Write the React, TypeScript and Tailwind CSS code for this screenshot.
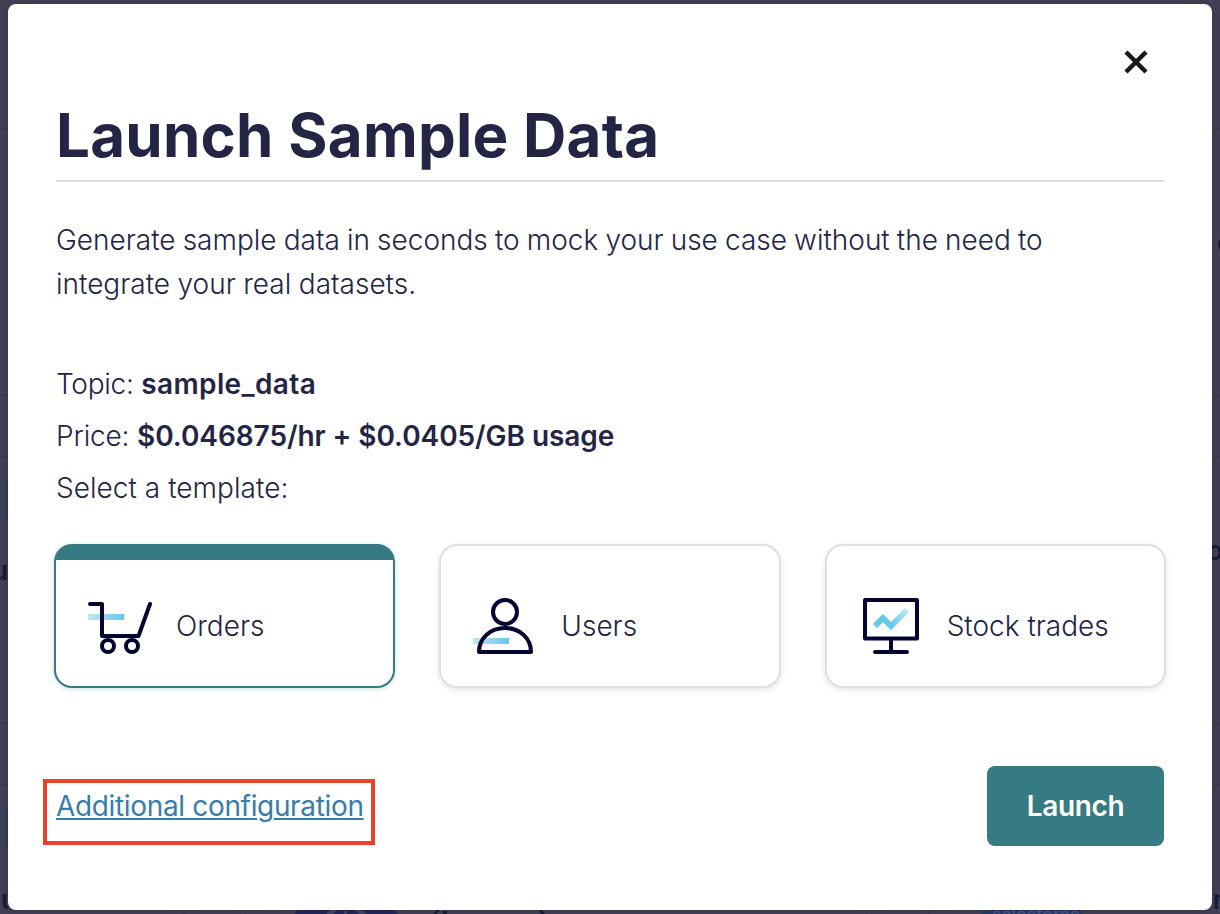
import type { ReactNode } from 'react';

function CartIcon() {
  return (
    <svg width="64" height="64" viewBox="0 0 64 64" fill="none" className="shrink-0">
      <defs>
        <linearGradient id="cart" x1="0" x2="1" y1="0" y2="0">
          <stop stopColor="#c0e8f6" />
          <stop offset="1" stopColor="#64c7e8" />
        </linearGradient>
      </defs>
      <rect y="20" width="36" height="6" fill="url(#cart)" />
      <g stroke="#040431" strokeWidth="4" strokeLinecap="round" strokeLinejoin="round">
        <path d="M2 10H14V42H50.500L62 10" />
        <circle cx="20" cy="52" r="6" />
        <circle cx="44" cy="52" r="6" />
      </g>
    </svg>
  );
}

function UserIcon() {
  return (
    <svg width="64" height="64" viewBox="0 0 64 64" fill="none" className="shrink-0">
      <defs>
        <linearGradient id="user" x1="0" x2="1" y1="0" y2="0">
          <stop stopColor="#c0e8f6" />
          <stop offset="1" stopColor="#64c7e8" />
        </linearGradient>
      </defs>
      <rect y="44" width="36" height="6" fill="url(#user)" />
      <g stroke="#040431" strokeWidth="4" strokeLinejoin="round">
        <circle cx="32" cy="18" r="12" />
        <path d="M6 58C6 44 17.500 34 32 34S58 44 58 58Z" />
      </g>
    </svg>
  );
}

function StockIcon() {
  return (
    <svg width="64" height="64" viewBox="0 0 64 64" fill="none" className="shrink-0">
      <defs>
        <linearGradient id="stock" gradientUnits="userSpaceOnUse" x1="32" y1="32" x2="50" y2="14">
          <stop stopColor="#64c7e8" />
          <stop offset="1" stopColor="#c6ebf8" />
        </linearGradient>
      </defs>
      <path d="M16 32L24 24L32 32L48 16" stroke="url(#stock)" strokeWidth="6" />
      <g stroke="#040431" strokeWidth="4" strokeLinecap="round" strokeLinejoin="round">
        <rect x="6" y="6" width="52" height="38.500" />
        <path d="M32 45V58M16 58H48" />
      </g>
    </svg>
  );
}

function Template({ icon, label, selected = false }: { icon: ReactNode; label: string; selected?: boolean }) {
  return (
    <button
      className={
        selected
          ? 'flex h-36 flex-1 flex-col overflow-hidden rounded-[18px] bg-[#367a82] p-0.5 pt-4 text-left shadow-[0_1px_5px_rgba(54,122,130,0.25)]'
          : 'flex h-36 flex-1 flex-col overflow-hidden rounded-[18px] border-2 border-[#dfdfdf] bg-white pt-[14px] text-left shadow-[0_2px_6px_rgba(0,0,0,0.10)]'
      }
    >
      <span className="flex w-full flex-1 items-center gap-6 rounded-b-2xl bg-white pt-1.5 pl-8">
        {icon}
        <span className="whitespace-nowrap">{label}</span>
      </span>
    </button>
  );
}

function LeftRail() {
  return (
    <div className="col-start-1 row-start-2 flex flex-col overflow-hidden text-[26px] leading-8 font-semibold text-[#19193a]">
      <div className="mt-[124px] h-0.5 shrink-0 bg-[#3c3b50]" />
      <div className="mt-[264px] h-0.5 shrink-0 bg-[#3c3b50]" />
      <div className="mt-[60px] h-0.5 shrink-0 bg-[#3c3b50]" />
      <div className="mt-[18px] h-11 shrink-0 bg-[#3d3e58]" />
      <span className="mt-[35px] -ml-2 h-8">u</span>
      <div className="mt-[135px] h-0.5 shrink-0 bg-[#3c3b50]" />
      <div className="mt-[60px] h-0.5 shrink-0 bg-[#3c3b50]" />
      <div className="mt-[18px] h-11 shrink-0 bg-[#3d3e58]" />
      <span className="mt-9 h-8 pl-px">u</span>
    </div>
  );
}

function RightRail() {
  return (
    <div className="col-start-3 row-start-2 flex flex-col overflow-hidden text-[26px] leading-8 font-semibold text-[#19193a]">
      <div className="mt-[124px] h-0.5 shrink-0 bg-[#3c3b50]" />
      <span className="mt-[97px] h-8 pl-[5px]">o</span>
      <div className="mt-[135px] h-0.5 shrink-0 bg-[#3c3b50]" />
      <div className="mt-[60px] h-0.5 shrink-0 bg-[#3c3b50]" />
      <span className="mt-[77px] -ml-[5px] h-8">o</span>
      <div className="mt-[155px] h-0.5 shrink-0 bg-[#3c3b50]" />
      <div className="mt-[60px] h-0.5 shrink-0 bg-[#3c3b50]" />
      <span className="mt-[98px] h-8 pl-px">n</span>
    </div>
  );
}

function BottomStrip() {
  return (
    <div className="col-span-3 row-start-3 flex h-1 items-start overflow-hidden text-[24px] leading-7 font-semibold text-[#19193a]">
      <div className="ml-[183px] h-1 w-0.5 shrink-0 bg-[#3c3b50]" />
      <div className="ml-[59px] h-1 w-0.5 shrink-0 bg-[#3c3b50]" />
      <svg className="ml-12 shrink-0" width="104" height="4" viewBox="0 0 104 4">
        <path d="M4 0H100L104 4H0Z" fill="#23265a" />
        <path d="M36 0H43L39 4H32ZM67 0H60L66 4H73ZM50 1H53V4H50Z" fill="#43436a" />
      </svg>
      <svg className="ml-[35px] shrink-0" width="112" height="4" viewBox="0 0 112 4" fill="#19193a">
        <path d="M4 0H7L3 4H0ZM10 1H14V4H10ZM106 0H109L112 4H108Z" />
      </svg>
      <div className="ml-[321px] h-1 w-0.5 shrink-0 bg-[#3c3b50]" />
      <div className="ml-[60px] h-1 w-0.5 shrink-0 bg-[#3c3b50]" />
      <div className="ml-[52px] h-1 w-[100px] shrink-0 overflow-hidden rounded-tl-[4px] bg-[#283a6b]">
        <span className="-mt-[9px] block pl-2.5 text-[18px] leading-7 font-normal text-[#4d5780]">salesforce</span>
      </div>
    </div>
  );
}

export default function App() {
  return (
    <div className="grid h-[914px] w-[1220px] grid-cols-[8px_1204px_8px] grid-rows-[4px_906px_4px] overflow-hidden bg-[#414055] font-['Inter',sans-serif] text-[28px] font-light text-[#242445]">
      <LeftRail />
      <RightRail />
      <BottomStrip />
      <main className="col-start-2 row-start-2 flex h-[906px] flex-col rounded-lg bg-white px-12 shadow-[0_0_8px_rgba(0,0,0,0.18)]">
        <div className="flex h-[88px] shrink-0 items-end justify-end pr-4">
          <button aria-label="Close" className="mb-[18px]">
            <svg width="24" height="24" viewBox="0 0 24 24" stroke="#171721" strokeWidth="4.500">
              <path d="M2 2L22 22M22 2L2 22" />
            </svg>
          </button>
        </div>
        <h1 className="h-[90px] shrink-0 border-b-2 border-[#dfdfe5] text-[60px] leading-[86px] font-bold tracking-[0.27px] whitespace-nowrap">
          Launch Sample Data
        </h1>
        <p className="mt-9 leading-[44px]">
          <span className="[word-spacing:-0.75px]">Generate sample data in seconds to mock your use case without the need to</span>
          <br />
          <span className="[word-spacing:-0.35px]">integrate your real datasets.</span>
        </p>
        <div className="mt-[52px] leading-[52px]">
          <p><span className="tracking-[-0.25px]">Topic: </span><b className="font-semibold tracking-[0.36px]">sample_data</b></p>
          <p><span className="tracking-[-0.15px]">Price: </span><b className="font-semibold tracking-[-0.07px]">$0.046875/hr + $0.0405/GB usage</b></p>
          <p className="tracking-[0.04px]">Select a template:</p>
        </div>
        <div className="-mx-0.5 mt-[30px] flex gap-11">
          <Template selected icon={<CartIcon />} label="Orders" />
          <Template icon={<UserIcon />} label="Users" />
          <Template icon={<StockIcon />} label="Stock trades" />
        </div>
        <div className="mt-[78px] flex items-start justify-between">
          <div className="mt-[13px] -ml-[13px] h-[66px] w-[332px] border-4 border-[#ea4129] pt-[1px] pl-[9px]">
            <a className="leading-[44px] font-normal tracking-[-0.34px] whitespace-nowrap text-[#377dac] underline decoration-2 underline-offset-[2px]">
              Additional configuration
            </a>
          </div>
          <button className="h-20 w-[177px] rounded-lg bg-[#367a82] font-semibold tracking-[-0.35px] text-white">Launch</button>
        </div>
      </main>
    </div>
  );
}
